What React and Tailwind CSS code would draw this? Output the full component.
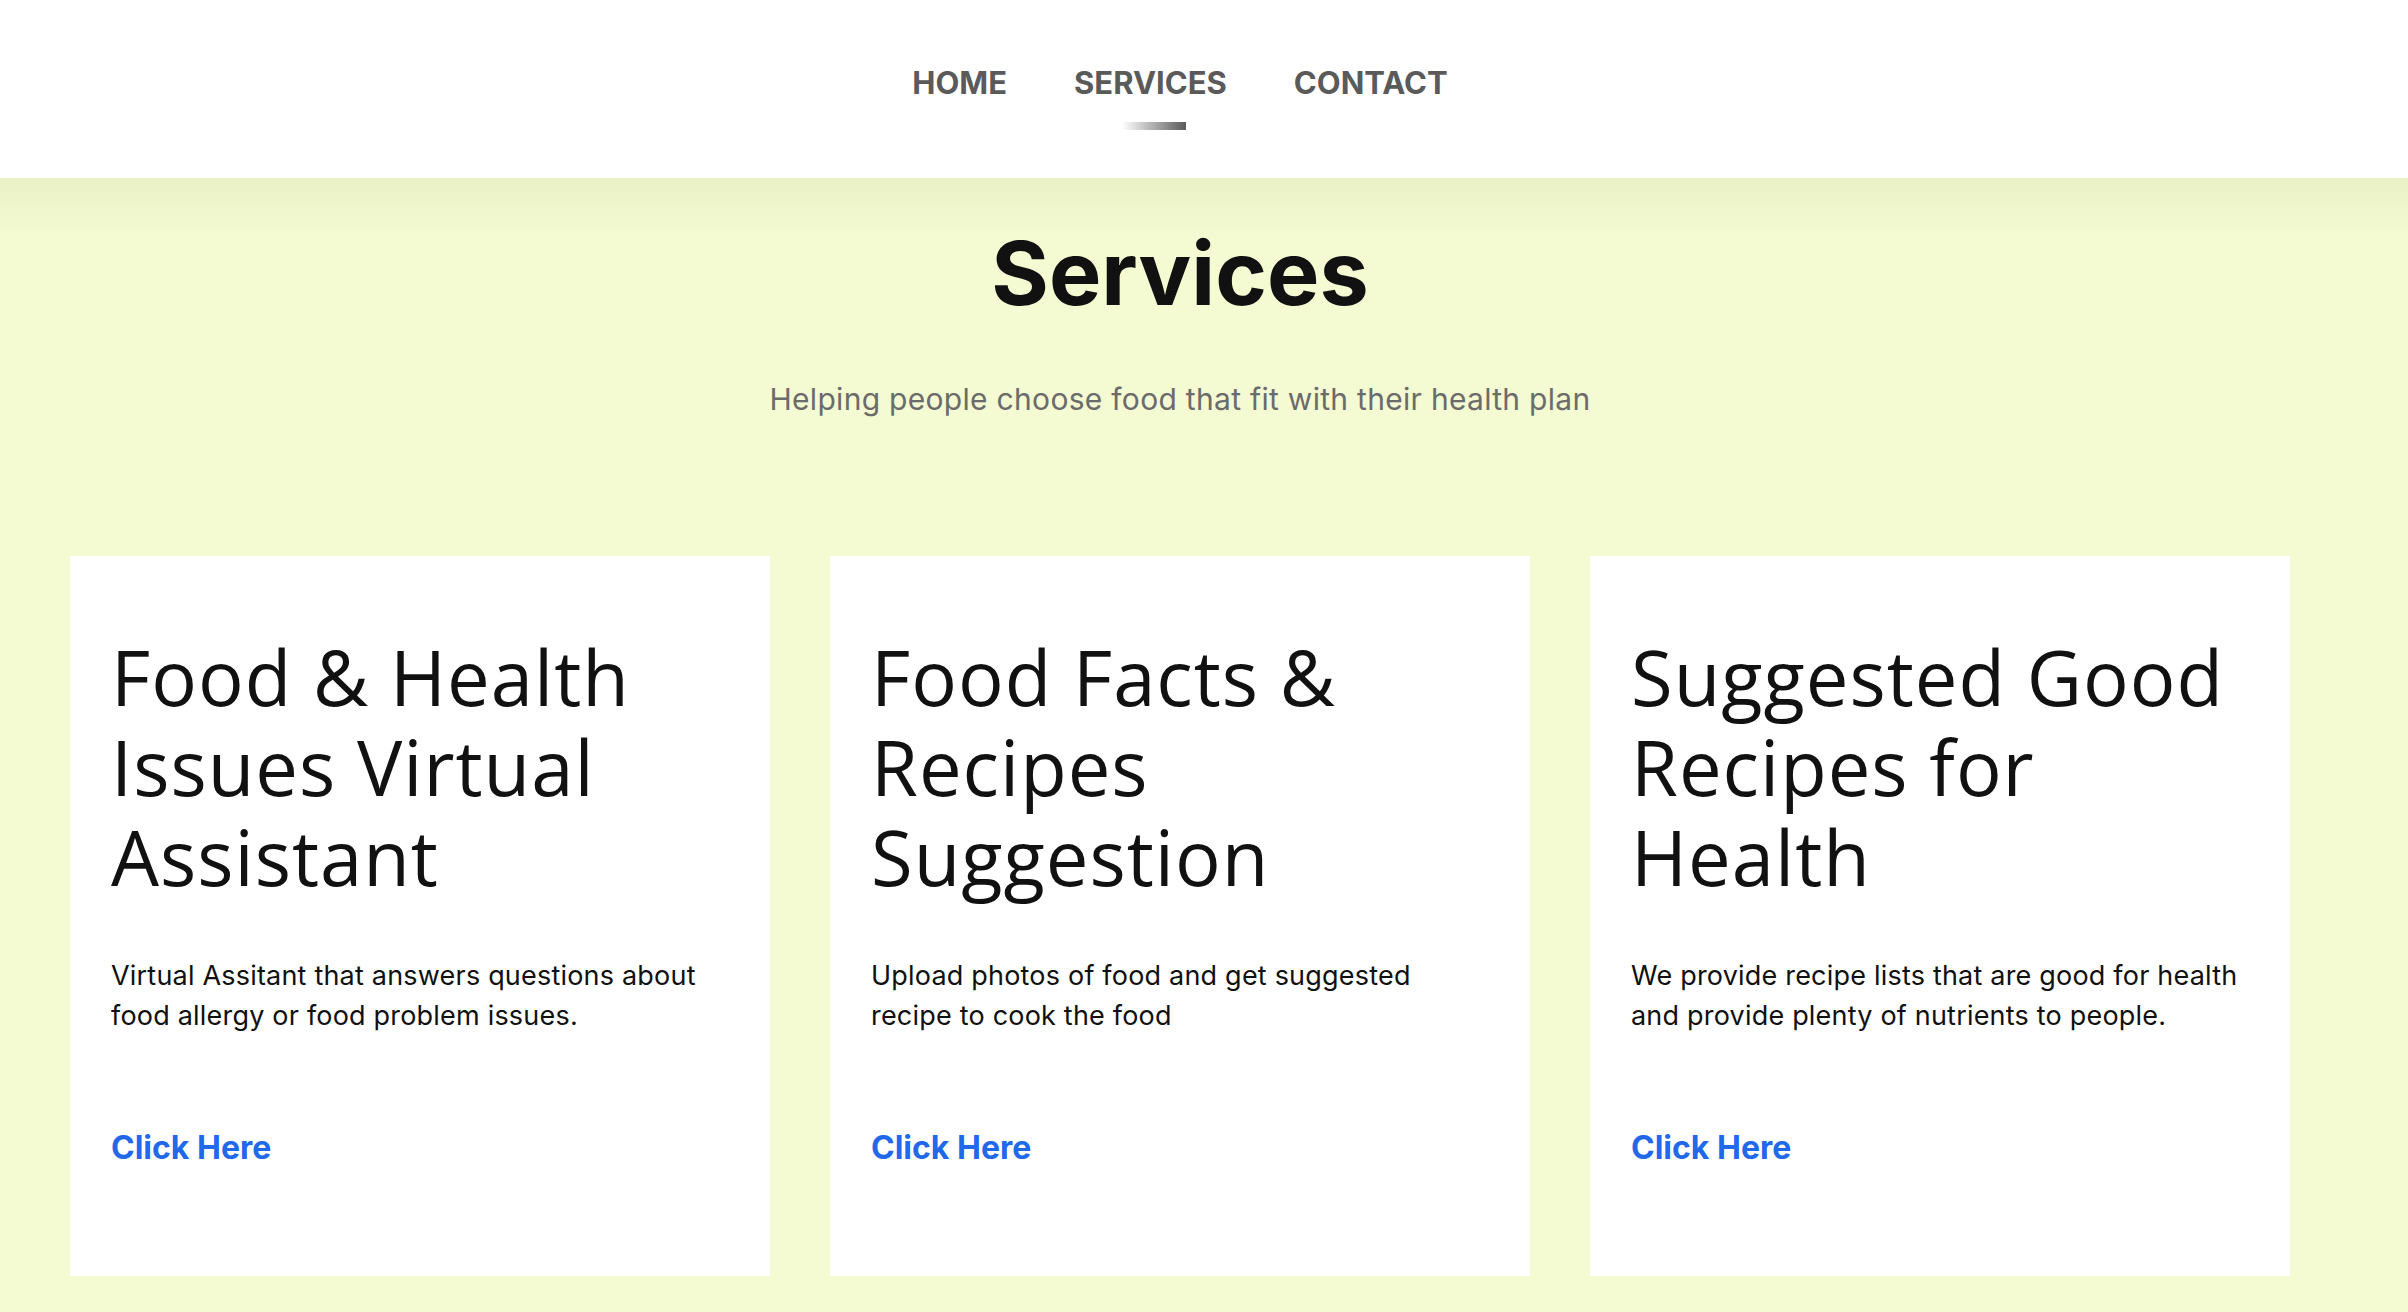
export default function App() {
  const links = [
    { label: 'HOME', active: false },
    { label: 'SERVICES', active: true },
    { label: 'CONTACT', active: false },
  ];

  const services = [
    {
      title: 'Food & Health Issues Virtual Assistant',
      text: 'Virtual Assitant that answers questions about food allergy or food problem issues.',
    },
    {
      title: 'Food Facts & Recipes Suggestion',
      text: 'Upload photos of food and get suggested recipe to cook the food',
    },
    {
      title: 'Suggested Good Recipes for Health',
      text: 'We provide recipe lists that are good for health and provide plenty of nutrients to people.',
    },
  ];

  return (
    <div className="min-h-screen bg-[#f4fad2] font-['Inter',sans-serif]">
      <nav className="h-[178px] bg-white pl-[70px] pr-[118px] pt-[64px]">
        <ul className="flex justify-center gap-[67px]">
          {links.map(({ label, active }) => (
            <li key={label} className="flex flex-col items-center">
              <a href="#" className="text-[31px] font-bold leading-[37px] text-[#5a5a5a]">
                {label}
              </a>
              {active && (
                <span className="ml-[8px] mt-[21px] h-[8px] w-[64px] bg-linear-to-r from-transparent to-[#5a5a5a]" />
              )}
            </li>
          ))}
        </ul>
      </nav>

      <section className="bg-[linear-gradient(to_bottom,#eaf1c6_0px,#f4fad2_60px)] pb-[36px] pl-[70px] pr-[118px] pt-[51px]">
        <div className="text-center">
          <h1 className="text-[88px] font-bold leading-[88px] text-[#111111]">Services</h1>
          <p className="mt-[67px] text-[30px] leading-[30px] tracking-[0.3px] text-[#6b6b6b]">
            Helping people choose food that fit with their health plan
          </p>
        </div>

        <div className="mt-[142px] grid grid-cols-3 gap-[60px]">
          {services.map((s) => (
            <div key={s.title} className="h-[720px] bg-white px-[41px] pt-[76px]">
              <h2 className="font-['Open_Sans',sans-serif] text-[76px] font-normal leading-[90px] tracking-[1px] text-[#111111]">
                {s.title}
              </h2>
              <p className="mt-[54px] text-[27px] leading-[40px] tracking-[0.2px] text-[#111111]">{s.text}</p>
              <a href="#" className="mt-[93px] block text-[32px] font-bold leading-[38px] text-[#2168ea]">
                Click Here
              </a>
            </div>
          ))}
        </div>
      </section>
    </div>
  );
}
